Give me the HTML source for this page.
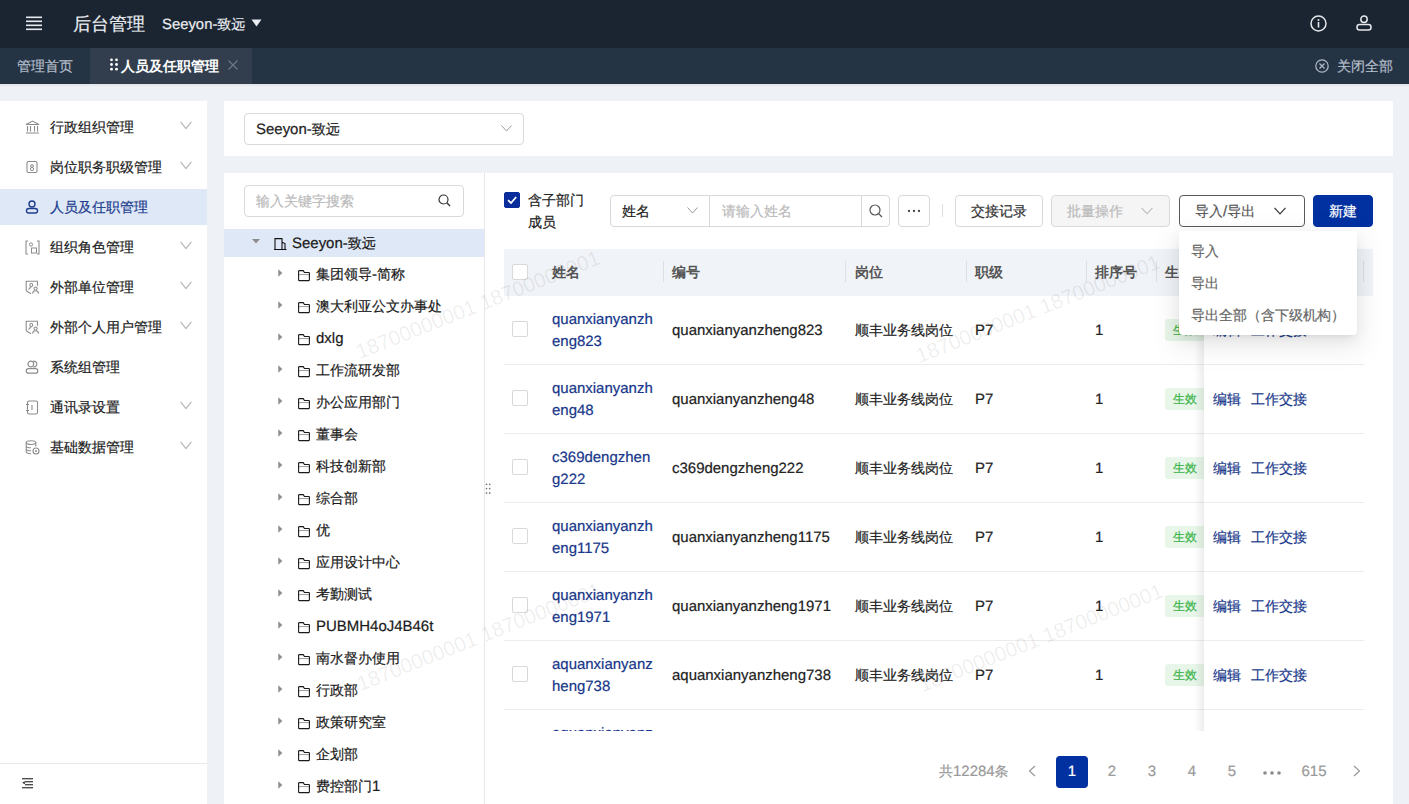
<!DOCTYPE html>
<html><head><meta charset="utf-8">
<style>
*{margin:0;padding:0;box-sizing:border-box}
html,body{width:1409px;height:804px;overflow:hidden}
@font-face{font-family:"LSA";src:local("Liberation Sans");font-weight:normal;size-adjust:107%;unicode-range:U+0020-007E}
@font-face{font-family:"LSA";src:local("Liberation Sans Bold");font-weight:bold;size-adjust:107%;unicode-range:U+0020-007E}
body{background:#eef1f5;text-rendering:geometricPrecision;font-family:"LSA","Liberation Sans",sans-serif;font-size:14px;color:#333;position:relative}
.a{position:absolute}
.t{position:absolute;white-space:nowrap;line-height:20px}
svg{display:block}
.t,.tx,.nm,.cd,.ps,.lv,.od,.op,.op2,.pg,.btn,.tag{-webkit-text-stroke:0.2px currentColor}
.t,.tx,.th,.nm,.cd,.ps,.lv,.od,.op,.op2,.pg{margin-top:1px}
.btn{padding-top:1px}
/* header */
#hdr{left:0;top:0;width:1409px;height:48px;background:#1b2532}
#tabs{left:0;top:48px;width:1409px;height:36px;background:#253445}
#side{left:0;top:101px;width:207px;height:703px;background:#fff}
.mi{position:absolute;left:0;width:207px;height:36px}
.mi .tx{position:absolute;left:50px;top:8px;line-height:20px;color:#222}
.mi .ic{position:absolute;left:25px;top:11px}
.mi .cv{position:absolute;left:180px;top:12px}
#top{left:224px;top:101px;width:1169px;height:55px;background:#fff}
#low{left:224px;top:173px;width:1169px;height:631px;background:#fff}
.inp{position:absolute;border:1px solid #d9d9d9;border-radius:4px;background:#fff}
.tr{position:absolute;left:224px;width:260px;height:32px}
.tr .car{position:absolute;left:54px;top:11px}
.tr .fd{position:absolute;left:73.5px;top:11.5px}
.tr .tx{position:absolute;left:92px;top:6px;line-height:20px;color:#1a1a1a}
.btn{position:absolute;top:195px;height:32px;border:1px solid #d9d9d9;border-radius:4px;background:#fff;color:#333;line-height:30px;text-align:center}
.th{position:absolute;top:262px;line-height:20px;font-weight:bold;color:#555}
.sep{position:absolute;top:261px;width:1px;height:21px;background:#dcdfe6}
.rb{position:absolute;left:504px;width:860px;height:1px;background:#ececec}
.cb{position:absolute;width:16px;height:16px;border:1px solid #d9d9d9;border-radius:2px;background:#fff}
.nm{position:absolute;left:552px;line-height:22px;color:#17378a}
.cd{position:absolute;left:672px;line-height:20px;color:#222}
.ps{position:absolute;left:855px;line-height:20px;color:#222}
.lv{position:absolute;left:975px;line-height:20px;color:#222}
.od{position:absolute;left:1095px;line-height:20px;color:#222}
.tag{position:absolute;left:1165px;width:48px;height:22px;background:#e7f6e8;border-radius:3px;color:#3bb34a;font-size:12px;line-height:22px;padding-left:8px}
.op{position:absolute;left:1213px;line-height:20px;color:#17378a}
.op2{position:absolute;left:1251px;line-height:20px;color:#17378a}
.wm{position:absolute;font-size:20px;font-family:"Liberation Sans",sans-serif;color:rgba(0,0,0,0.075);white-space:nowrap;transform-origin:0 100%;transform:rotate(-21.6deg);line-height:20px}
.pg{position:absolute;top:761px;line-height:20px;color:#999;text-align:center;width:32px}
</style></head><body>

<!-- HEADER -->
<div id="hdr" class="a">
  <svg class="a" style="left:26px;top:16px" width="16" height="15" viewBox="0 0 16 15">
    <rect x="0" y="0.5" width="16" height="1.6" fill="#e8eaee"/>
    <rect x="0" y="4.5" width="16" height="1.6" fill="#e8eaee"/>
    <rect x="0" y="8.5" width="16" height="1.6" fill="#e8eaee"/>
    <rect x="0" y="12.5" width="16" height="1.6" fill="#e8eaee"/>
  </svg>
  <div class="t" style="left:73px;top:11px;font-size:18px;line-height:26px;color:#e9ecf0">后台管理</div>
  <div class="t" style="left:162px;top:13px;font-size:13.9px;line-height:22px;color:#e9ecf0">Seeyon-致远</div>
  <svg class="a" style="left:251px;top:19px" width="11" height="8" viewBox="0 0 11 8"><path d="M0.5 0.5 L10.5 0.5 L5.5 7.5Z" fill="#e9ecf0"/></svg>
  <svg class="a" style="left:1310px;top:15px" width="17" height="17" viewBox="0 0 17 17">
    <circle cx="8.5" cy="8.5" r="7.5" fill="none" stroke="#e6e8ec" stroke-width="1.5"/>
    <circle cx="8.5" cy="5" r="1" fill="#e6e8ec"/>
    <rect x="7.7" y="7" width="1.6" height="5.5" fill="#e6e8ec"/>
  </svg>
  <svg class="a" style="left:1356px;top:15px" width="16" height="16" viewBox="0 0 16 16">
    <circle cx="8" cy="4.2" r="3.2" fill="none" stroke="#e6e8ec" stroke-width="1.5"/>
    <rect x="1" y="9.5" width="14" height="5.5" rx="2.5" fill="none" stroke="#e6e8ec" stroke-width="1.5"/>
  </svg>
</div>

<!-- TABS -->
<div id="tabs" class="a">
  <div class="t" style="left:17px;top:8px;color:#b3bcc8">管理首页</div>
  <div class="a" style="left:90px;top:0;width:162px;height:36px;background:#323e4e"></div>
  <svg class="a" style="left:110px;top:10px" width="8" height="13" viewBox="0 0 8 13">
    <circle cx="1.5" cy="1.8" r="1.4" fill="#fff"/><circle cx="6.5" cy="1.8" r="1.4" fill="#fff"/>
    <circle cx="1.5" cy="6.5" r="1.4" fill="#fff"/><circle cx="6.5" cy="6.5" r="1.4" fill="#fff"/>
    <circle cx="1.5" cy="11.2" r="1.4" fill="#fff"/><circle cx="6.5" cy="11.2" r="1.4" fill="#fff"/>
  </svg>
  <div class="t" style="left:121px;top:8px;color:#fff;font-weight:bold;-webkit-text-stroke:0">人员及任职管理</div>
  <svg class="a" style="left:228px;top:12px" width="10" height="10" viewBox="0 0 10 10"><path d="M0.5 0.5L9.5 9.5M9.5 0.5L0.5 9.5" stroke="#6d7886" stroke-width="1.2"/></svg>
  <svg class="a" style="left:1315px;top:11px" width="14" height="14" viewBox="0 0 14 14">
    <circle cx="7" cy="7" r="6.2" fill="none" stroke="#b3bcc8" stroke-width="1.2"/>
    <path d="M4.5 4.5L9.5 9.5M9.5 4.5L4.5 9.5" stroke="#b3bcc8" stroke-width="1.2"/>
  </svg>
  <div class="t" style="left:1337px;top:8px;color:#b3bcc8">关闭全部</div>
</div>

<div class="a" style="left:0;top:84px;width:1409px;height:3px;background:linear-gradient(rgba(0,0,0,0.06),rgba(0,0,0,0))"></div>
<!-- SIDEBAR -->
<div id="side" class="a">
  <div class="mi" style="top:8px"><div class="tx">行政组织管理</div>
    <svg class="ic" width="15" height="14" viewBox="0 0 15 14"><path d="M1 4.5L7.5 1 14 4.5Z M2.5 6v5.5M5.5 6v5.5M9.5 6v5.5M12.5 6v5.5 M1 13h13" fill="none" stroke="#8c8c8c" stroke-width="1.1"/></svg>
    <svg class="cv" width="12" height="9" viewBox="0 0 12 9"><path d="M0.6 0.8L6 7.6 11.4 0.8" fill="none" stroke="#b3b3b3" stroke-width="1.1"/></svg></div>
  <div class="mi" style="top:48px"><div class="tx">岗位职务职级管理</div>
    <svg class="ic" width="14" height="14" viewBox="0 0 14 14"><rect x="2" y="1.5" width="10" height="11" rx="1.5" fill="none" stroke="#8c8c8c" stroke-width="1.1"/><circle cx="7" cy="6" r="1.4" fill="none" stroke="#8c8c8c"/><circle cx="7" cy="9" r="1.6" fill="none" stroke="#8c8c8c"/></svg>
    <svg class="cv" width="12" height="9" viewBox="0 0 12 9"><path d="M0.6 0.8L6 7.6 11.4 0.8" fill="none" stroke="#b3b3b3" stroke-width="1.1"/></svg></div>
  <div class="mi" style="top:88px;background:#dfe8f6"><div class="tx" style="color:#1d3d8f">人员及任职管理</div>
    <svg class="ic" width="14" height="14" viewBox="0 0 14 14"><circle cx="7" cy="4" r="3" fill="none" stroke="#1d3d8f" stroke-width="1.4"/><rect x="1.5" y="8.5" width="11" height="4.5" rx="2.2" fill="none" stroke="#1d3d8f" stroke-width="1.4"/></svg></div>
  <div class="mi" style="top:128px"><div class="tx">组织角色管理</div>
    <svg class="ic" width="15" height="15" viewBox="0 0 15 15"><path d="M3 1H1v13h2M12 1h2v13h-2" fill="none" stroke="#8c8c8c" stroke-width="1.1"/><circle cx="6" cy="4.5" r="1.6" fill="none" stroke="#8c8c8c"/><rect x="6.5" y="8" width="5" height="5" fill="none" stroke="#8c8c8c"/></svg>
    <svg class="cv" width="12" height="9" viewBox="0 0 12 9"><path d="M0.6 0.8L6 7.6 11.4 0.8" fill="none" stroke="#b3b3b3" stroke-width="1.1"/></svg></div>
  <div class="mi" style="top:168px"><div class="tx">外部单位管理</div>
    <svg class="ic" width="15" height="15" viewBox="0 0 15 15"><path d="M6 13.8L1.2 10.6V1.2h11.3v4.6" fill="none" stroke="#8c8c8c" stroke-width="1.1"/><circle cx="6.3" cy="5" r="1.5" fill="none" stroke="#8c8c8c" stroke-width="1.05"/><path d="M3.6 9.6c.4-1.4 1.4-2.1 2.7-2.1" fill="none" stroke="#8c8c8c" stroke-width="1.05"/><circle cx="10.6" cy="8.6" r="1.6" fill="none" stroke="#8c8c8c" stroke-width="1.05"/><path d="M7.6 13.6c.2-1.8 1.4-2.8 3-2.8s2.8 1 3 2.8" fill="none" stroke="#8c8c8c" stroke-width="1.05"/></svg>
    <svg class="cv" width="12" height="9" viewBox="0 0 12 9"><path d="M0.6 0.8L6 7.6 11.4 0.8" fill="none" stroke="#b3b3b3" stroke-width="1.1"/></svg></div>
  <div class="mi" style="top:208px"><div class="tx">外部个人用户管理</div>
    <svg class="ic" width="15" height="15" viewBox="0 0 15 15"><path d="M6 13.8L1.2 10.6V1.2h11.3v4.6" fill="none" stroke="#8c8c8c" stroke-width="1.1"/><circle cx="6.3" cy="5" r="1.5" fill="none" stroke="#8c8c8c" stroke-width="1.05"/><path d="M3.6 9.6c.4-1.4 1.4-2.1 2.7-2.1" fill="none" stroke="#8c8c8c" stroke-width="1.05"/><circle cx="10.6" cy="8.6" r="1.6" fill="none" stroke="#8c8c8c" stroke-width="1.05"/><path d="M7.6 13.6c.2-1.8 1.4-2.8 3-2.8s2.8 1 3 2.8" fill="none" stroke="#8c8c8c" stroke-width="1.05"/></svg>
    <svg class="cv" width="12" height="9" viewBox="0 0 12 9"><path d="M0.6 0.8L6 7.6 11.4 0.8" fill="none" stroke="#b3b3b3" stroke-width="1.1"/></svg></div>
  <div class="mi" style="top:248px"><div class="tx">系统组管理</div>
    <svg class="ic" width="14" height="14" viewBox="0 0 14 14"><path d="M8.2 1.3a2.9 2.9 0 1 1 0 5.6" fill="none" stroke="#8c8c8c" stroke-width="1.2"/><circle cx="5.8" cy="4.1" r="2.9" fill="none" stroke="#8c8c8c" stroke-width="1.2"/><rect x="1.2" y="8.6" width="11.6" height="4.6" rx="2.3" fill="none" stroke="#8c8c8c" stroke-width="1.2"/></svg></div>
  <div class="mi" style="top:288px"><div class="tx">通讯录设置</div>
    <svg class="ic" width="14" height="15" viewBox="0 0 14 15"><rect x="2.5" y="1" width="10" height="13" rx="1.5" fill="none" stroke="#8c8c8c" stroke-width="1.1"/><path d="M1 4.5h3M1 10.5h3M7 5v5" fill="none" stroke="#8c8c8c" stroke-width="1.1"/></svg>
    <svg class="cv" width="12" height="9" viewBox="0 0 12 9"><path d="M0.6 0.8L6 7.6 11.4 0.8" fill="none" stroke="#b3b3b3" stroke-width="1.1"/></svg></div>
  <div class="mi" style="top:328px"><div class="tx">基础数据管理</div>
    <svg class="ic" width="15" height="15" viewBox="0 0 15 15"><ellipse cx="6" cy="2.6" rx="4.8" ry="1.9" fill="none" stroke="#8c8c8c" stroke-width="1.1"/><path d="M1.2 2.6v9.2c0 1 2.1 1.9 4.8 1.9M10.8 2.6v4M1.2 5.9c0 1 2.1 1.9 4.8 1.9M1.2 8.9c0 1 2.1 1.9 4.8 1.9" fill="none" stroke="#8c8c8c" stroke-width="1.1"/><circle cx="11" cy="11" r="3" fill="none" stroke="#8c8c8c" stroke-width="1.1"/><circle cx="11" cy="11" r="1" fill="#8c8c8c"/></svg>
    <svg class="cv" width="12" height="9" viewBox="0 0 12 9"><path d="M0.6 0.8L6 7.6 11.4 0.8" fill="none" stroke="#b3b3b3" stroke-width="1.1"/></svg></div>
  <div class="a" style="left:0;top:662px;width:207px;height:1px;background:#e8e8e8"></div>
  <svg class="a" style="left:22px;top:677px" width="11" height="11" viewBox="0 0 11 11"><rect x="0" y="0.2" width="11" height="1.1" fill="#222"/><rect x="3" y="3.2" width="8" height="1.1" fill="#222"/><rect x="3" y="6.2" width="8" height="1.1" fill="#222"/><rect x="0" y="9.2" width="11" height="1.1" fill="#222"/><path d="M0.2 4.7L2.8 3.2V6.3Z" fill="#222"/></svg>
</div>

<!-- TOP PANEL -->
<div id="top" class="a"></div>
<div class="inp" style="left:244px;top:113px;width:280px;height:32px"></div>
<div class="t" style="left:256px;top:119px;color:#222">Seeyon-致远</div>
<svg class="a" style="left:501px;top:125px" width="11" height="7" viewBox="0 0 11 7"><path d="M0.5 0.5L5.5 6 10.5 0.5" fill="none" stroke="#999" stroke-width="1"/></svg>

<!-- LOWER PANEL -->
<div id="low" class="a"></div>
<div class="a" style="left:484px;top:173px;width:1px;height:631px;background:#e8e8e8"></div>
<!-- splitter dots -->
<svg class="a" style="left:485px;top:483px" width="7" height="11" viewBox="0 0 7 11"><circle cx="1.5" cy="1.3" r=".85" fill="#777"/><circle cx="4.7" cy="1.3" r=".85" fill="#777"/><circle cx="1.5" cy="5.6" r=".85" fill="#777"/><circle cx="4.7" cy="5.6" r=".85" fill="#777"/><circle cx="1.5" cy="9.9" r=".85" fill="#777"/><circle cx="4.7" cy="9.9" r=".85" fill="#777"/></svg>

<!-- tree search -->
<div class="inp" style="left:244px;top:185px;width:220px;height:32px"></div>
<div class="t" style="left:256px;top:191px;color:#bbb">输入关键字搜索</div>
<svg class="a" style="left:438px;top:194px" width="13" height="13" viewBox="0 0 13 13"><circle cx="5.5" cy="5.5" r="4.5" fill="none" stroke="#333" stroke-width="1.2"/><path d="M8.8 8.8L12 12" stroke="#333" stroke-width="1.3"/></svg>

<!-- tree -->
<div class="tr" style="top:229px;height:28px;background:#dfe8f6">
  <svg class="a" style="left:28px;top:10px" width="8" height="5" viewBox="0 0 8 5"><path d="M0 0H8L4 4.5Z" fill="#8c8c8c"/></svg>
  <svg class="a" style="left:50px;top:8px" width="13" height="13" viewBox="0 0 13 13"><path d="M1 12.5V1.6h7v10.9M8 5.2l3 1.4v5.9M0 12.5h12.5" fill="none" stroke="#111" stroke-width="1.1"/></svg>
  <div class="tx" style="left:68px;top:4px">Seeyon-致远</div>
</div>
<div class="tr" style="top:258px">
  <svg class="car" width="5" height="8" viewBox="0 0 5 8"><path d="M0.3 0.3V7.7L4.3 4Z" fill="#8c8c8c"/></svg>
  <svg class="fd" width="12" height="12" viewBox="0 0 12 12"><path d="M11.4 4.6H.6" fill="none" stroke="#9a9a9a" stroke-width="1"/><path d="M1.2 .6h4.1l1.1 1.9h4.4a.6.6 0 0 1 .6.6v6.9a.6.6 0 0 1-.6.6H1.2a.6.6 0 0 1-.6-.6V1.2a.6.6 0 0 1 .6-.6Z" fill="none" stroke="#1a1a1a" stroke-width="1.1"/></svg>
  <div class="tx">集团领导-简称</div></div>
<div class="tr" style="top:290px">
  <svg class="car" width="5" height="8" viewBox="0 0 5 8"><path d="M0.3 0.3V7.7L4.3 4Z" fill="#8c8c8c"/></svg>
  <svg class="fd" width="12" height="12" viewBox="0 0 12 12"><path d="M11.4 4.6H.6" fill="none" stroke="#9a9a9a" stroke-width="1"/><path d="M1.2 .6h4.1l1.1 1.9h4.4a.6.6 0 0 1 .6.6v6.9a.6.6 0 0 1-.6.6H1.2a.6.6 0 0 1-.6-.6V1.2a.6.6 0 0 1 .6-.6Z" fill="none" stroke="#1a1a1a" stroke-width="1.1"/></svg>
  <div class="tx">澳大利亚公文办事处</div></div>
<div class="tr" style="top:322px">
  <svg class="car" width="5" height="8" viewBox="0 0 5 8"><path d="M0.3 0.3V7.7L4.3 4Z" fill="#8c8c8c"/></svg>
  <svg class="fd" width="12" height="12" viewBox="0 0 12 12"><path d="M11.4 4.6H.6" fill="none" stroke="#9a9a9a" stroke-width="1"/><path d="M1.2 .6h4.1l1.1 1.9h4.4a.6.6 0 0 1 .6.6v6.9a.6.6 0 0 1-.6.6H1.2a.6.6 0 0 1-.6-.6V1.2a.6.6 0 0 1 .6-.6Z" fill="none" stroke="#1a1a1a" stroke-width="1.1"/></svg>
  <div class="tx">dxlg</div></div>
<div class="tr" style="top:354px">
  <svg class="car" width="5" height="8" viewBox="0 0 5 8"><path d="M0.3 0.3V7.7L4.3 4Z" fill="#8c8c8c"/></svg>
  <svg class="fd" width="12" height="12" viewBox="0 0 12 12"><path d="M11.4 4.6H.6" fill="none" stroke="#9a9a9a" stroke-width="1"/><path d="M1.2 .6h4.1l1.1 1.9h4.4a.6.6 0 0 1 .6.6v6.9a.6.6 0 0 1-.6.6H1.2a.6.6 0 0 1-.6-.6V1.2a.6.6 0 0 1 .6-.6Z" fill="none" stroke="#1a1a1a" stroke-width="1.1"/></svg>
  <div class="tx">工作流研发部</div></div>
<div class="tr" style="top:386px">
  <svg class="car" width="5" height="8" viewBox="0 0 5 8"><path d="M0.3 0.3V7.7L4.3 4Z" fill="#8c8c8c"/></svg>
  <svg class="fd" width="12" height="12" viewBox="0 0 12 12"><path d="M11.4 4.6H.6" fill="none" stroke="#9a9a9a" stroke-width="1"/><path d="M1.2 .6h4.1l1.1 1.9h4.4a.6.6 0 0 1 .6.6v6.9a.6.6 0 0 1-.6.6H1.2a.6.6 0 0 1-.6-.6V1.2a.6.6 0 0 1 .6-.6Z" fill="none" stroke="#1a1a1a" stroke-width="1.1"/></svg>
  <div class="tx">办公应用部门</div></div>
<div class="tr" style="top:418px">
  <svg class="car" width="5" height="8" viewBox="0 0 5 8"><path d="M0.3 0.3V7.7L4.3 4Z" fill="#8c8c8c"/></svg>
  <svg class="fd" width="12" height="12" viewBox="0 0 12 12"><path d="M11.4 4.6H.6" fill="none" stroke="#9a9a9a" stroke-width="1"/><path d="M1.2 .6h4.1l1.1 1.9h4.4a.6.6 0 0 1 .6.6v6.9a.6.6 0 0 1-.6.6H1.2a.6.6 0 0 1-.6-.6V1.2a.6.6 0 0 1 .6-.6Z" fill="none" stroke="#1a1a1a" stroke-width="1.1"/></svg>
  <div class="tx">董事会</div></div>
<div class="tr" style="top:450px">
  <svg class="car" width="5" height="8" viewBox="0 0 5 8"><path d="M0.3 0.3V7.7L4.3 4Z" fill="#8c8c8c"/></svg>
  <svg class="fd" width="12" height="12" viewBox="0 0 12 12"><path d="M11.4 4.6H.6" fill="none" stroke="#9a9a9a" stroke-width="1"/><path d="M1.2 .6h4.1l1.1 1.9h4.4a.6.6 0 0 1 .6.6v6.9a.6.6 0 0 1-.6.6H1.2a.6.6 0 0 1-.6-.6V1.2a.6.6 0 0 1 .6-.6Z" fill="none" stroke="#1a1a1a" stroke-width="1.1"/></svg>
  <div class="tx">科技创新部</div></div>
<div class="tr" style="top:482px">
  <svg class="car" width="5" height="8" viewBox="0 0 5 8"><path d="M0.3 0.3V7.7L4.3 4Z" fill="#8c8c8c"/></svg>
  <svg class="fd" width="12" height="12" viewBox="0 0 12 12"><path d="M11.4 4.6H.6" fill="none" stroke="#9a9a9a" stroke-width="1"/><path d="M1.2 .6h4.1l1.1 1.9h4.4a.6.6 0 0 1 .6.6v6.9a.6.6 0 0 1-.6.6H1.2a.6.6 0 0 1-.6-.6V1.2a.6.6 0 0 1 .6-.6Z" fill="none" stroke="#1a1a1a" stroke-width="1.1"/></svg>
  <div class="tx">综合部</div></div>
<div class="tr" style="top:514px">
  <svg class="car" width="5" height="8" viewBox="0 0 5 8"><path d="M0.3 0.3V7.7L4.3 4Z" fill="#8c8c8c"/></svg>
  <svg class="fd" width="12" height="12" viewBox="0 0 12 12"><path d="M11.4 4.6H.6" fill="none" stroke="#9a9a9a" stroke-width="1"/><path d="M1.2 .6h4.1l1.1 1.9h4.4a.6.6 0 0 1 .6.6v6.9a.6.6 0 0 1-.6.6H1.2a.6.6 0 0 1-.6-.6V1.2a.6.6 0 0 1 .6-.6Z" fill="none" stroke="#1a1a1a" stroke-width="1.1"/></svg>
  <div class="tx">优</div></div>
<div class="tr" style="top:546px">
  <svg class="car" width="5" height="8" viewBox="0 0 5 8"><path d="M0.3 0.3V7.7L4.3 4Z" fill="#8c8c8c"/></svg>
  <svg class="fd" width="12" height="12" viewBox="0 0 12 12"><path d="M11.4 4.6H.6" fill="none" stroke="#9a9a9a" stroke-width="1"/><path d="M1.2 .6h4.1l1.1 1.9h4.4a.6.6 0 0 1 .6.6v6.9a.6.6 0 0 1-.6.6H1.2a.6.6 0 0 1-.6-.6V1.2a.6.6 0 0 1 .6-.6Z" fill="none" stroke="#1a1a1a" stroke-width="1.1"/></svg>
  <div class="tx">应用设计中心</div></div>
<div class="tr" style="top:578px">
  <svg class="car" width="5" height="8" viewBox="0 0 5 8"><path d="M0.3 0.3V7.7L4.3 4Z" fill="#8c8c8c"/></svg>
  <svg class="fd" width="12" height="12" viewBox="0 0 12 12"><path d="M11.4 4.6H.6" fill="none" stroke="#9a9a9a" stroke-width="1"/><path d="M1.2 .6h4.1l1.1 1.9h4.4a.6.6 0 0 1 .6.6v6.9a.6.6 0 0 1-.6.6H1.2a.6.6 0 0 1-.6-.6V1.2a.6.6 0 0 1 .6-.6Z" fill="none" stroke="#1a1a1a" stroke-width="1.1"/></svg>
  <div class="tx">考勤测试</div></div>
<div class="tr" style="top:610px">
  <svg class="car" width="5" height="8" viewBox="0 0 5 8"><path d="M0.3 0.3V7.7L4.3 4Z" fill="#8c8c8c"/></svg>
  <svg class="fd" width="12" height="12" viewBox="0 0 12 12"><path d="M11.4 4.6H.6" fill="none" stroke="#9a9a9a" stroke-width="1"/><path d="M1.2 .6h4.1l1.1 1.9h4.4a.6.6 0 0 1 .6.6v6.9a.6.6 0 0 1-.6.6H1.2a.6.6 0 0 1-.6-.6V1.2a.6.6 0 0 1 .6-.6Z" fill="none" stroke="#1a1a1a" stroke-width="1.1"/></svg>
  <div class="tx">PUBMH4oJ4B46t</div></div>
<div class="tr" style="top:642px">
  <svg class="car" width="5" height="8" viewBox="0 0 5 8"><path d="M0.3 0.3V7.7L4.3 4Z" fill="#8c8c8c"/></svg>
  <svg class="fd" width="12" height="12" viewBox="0 0 12 12"><path d="M11.4 4.6H.6" fill="none" stroke="#9a9a9a" stroke-width="1"/><path d="M1.2 .6h4.1l1.1 1.9h4.4a.6.6 0 0 1 .6.6v6.9a.6.6 0 0 1-.6.6H1.2a.6.6 0 0 1-.6-.6V1.2a.6.6 0 0 1 .6-.6Z" fill="none" stroke="#1a1a1a" stroke-width="1.1"/></svg>
  <div class="tx">南水督办使用</div></div>
<div class="tr" style="top:674px">
  <svg class="car" width="5" height="8" viewBox="0 0 5 8"><path d="M0.3 0.3V7.7L4.3 4Z" fill="#8c8c8c"/></svg>
  <svg class="fd" width="12" height="12" viewBox="0 0 12 12"><path d="M11.4 4.6H.6" fill="none" stroke="#9a9a9a" stroke-width="1"/><path d="M1.2 .6h4.1l1.1 1.9h4.4a.6.6 0 0 1 .6.6v6.9a.6.6 0 0 1-.6.6H1.2a.6.6 0 0 1-.6-.6V1.2a.6.6 0 0 1 .6-.6Z" fill="none" stroke="#1a1a1a" stroke-width="1.1"/></svg>
  <div class="tx">行政部</div></div>
<div class="tr" style="top:706px">
  <svg class="car" width="5" height="8" viewBox="0 0 5 8"><path d="M0.3 0.3V7.7L4.3 4Z" fill="#8c8c8c"/></svg>
  <svg class="fd" width="12" height="12" viewBox="0 0 12 12"><path d="M11.4 4.6H.6" fill="none" stroke="#9a9a9a" stroke-width="1"/><path d="M1.2 .6h4.1l1.1 1.9h4.4a.6.6 0 0 1 .6.6v6.9a.6.6 0 0 1-.6.6H1.2a.6.6 0 0 1-.6-.6V1.2a.6.6 0 0 1 .6-.6Z" fill="none" stroke="#1a1a1a" stroke-width="1.1"/></svg>
  <div class="tx">政策研究室</div></div>
<div class="tr" style="top:738px">
  <svg class="car" width="5" height="8" viewBox="0 0 5 8"><path d="M0.3 0.3V7.7L4.3 4Z" fill="#8c8c8c"/></svg>
  <svg class="fd" width="12" height="12" viewBox="0 0 12 12"><path d="M11.4 4.6H.6" fill="none" stroke="#9a9a9a" stroke-width="1"/><path d="M1.2 .6h4.1l1.1 1.9h4.4a.6.6 0 0 1 .6.6v6.9a.6.6 0 0 1-.6.6H1.2a.6.6 0 0 1-.6-.6V1.2a.6.6 0 0 1 .6-.6Z" fill="none" stroke="#1a1a1a" stroke-width="1.1"/></svg>
  <div class="tx">企划部</div></div>
<div class="tr" style="top:770px">
  <svg class="car" width="5" height="8" viewBox="0 0 5 8"><path d="M0.3 0.3V7.7L4.3 4Z" fill="#8c8c8c"/></svg>
  <svg class="fd" width="12" height="12" viewBox="0 0 12 12"><path d="M11.4 4.6H.6" fill="none" stroke="#9a9a9a" stroke-width="1"/><path d="M1.2 .6h4.1l1.1 1.9h4.4a.6.6 0 0 1 .6.6v6.9a.6.6 0 0 1-.6.6H1.2a.6.6 0 0 1-.6-.6V1.2a.6.6 0 0 1 .6-.6Z" fill="none" stroke="#1a1a1a" stroke-width="1.1"/></svg>
  <div class="tx">费控部门1</div></div>

<div class="cb" style="left:504px;top:192px;background:#0a2d9c;border-color:#0a2d9c"><svg width="14" height="14" viewBox="0 0 14 14"><path d="M3 7.2L6 10 11.2 4" fill="none" stroke="#fff" stroke-width="1.8"/></svg></div>
<div class="t" style="left:528px;top:189px;line-height:22px;color:#222">含子部门<br>成员</div>
<div class="inp" style="left:610px;top:195px;width:280px;height:32px"></div>
<div class="a" style="left:709px;top:196px;width:1px;height:30px;background:#d9d9d9"></div>
<div class="a" style="left:861px;top:196px;width:1px;height:30px;background:#d9d9d9"></div>
<div class="t" style="left:622px;top:201px;color:#222">姓名</div>
<svg class="a" style="left:687px;top:207px" width="11" height="7" viewBox="0 0 11 7"><path d="M0.5 0.5L5.5 6 10.5 0.5" fill="none" stroke="#999" stroke-width="1"/></svg>
<div class="t" style="left:722px;top:201px;color:#bbb">请输入姓名</div>
<svg class="a" style="left:869px;top:204px" width="14" height="14" viewBox="0 0 14 14"><circle cx="6" cy="6" r="5" fill="none" stroke="#555" stroke-width="1.2"/><path d="M9.6 9.6L13 13" stroke="#555" stroke-width="1.3"/></svg>
<div class="btn" style="left:898px;width:32px"></div><svg class="a" style="left:907px;top:209px" width="14" height="4" viewBox="0 0 14 4"><circle cx="2" cy="2" r="1.15" fill="#444"/><circle cx="7" cy="2" r="1.15" fill="#444"/><circle cx="12" cy="2" r="1.15" fill="#444"/></svg>
<div class="a" style="left:942px;top:204px;width:1px;height:13px;background:#ddd"></div>
<div class="btn" style="left:955px;width:88px">交接记录</div>
<div class="btn" style="left:1051px;width:119px;background:#f5f5f5;color:#bbb;text-align:left;padding-left:15px">批量操作</div>
<svg class="a" style="left:1141px;top:207px" width="12" height="8" viewBox="0 0 12 8"><path d="M0.5 0.8L6 6.8 11.5 0.8" fill="none" stroke="#bbb" stroke-width="1.1"/></svg>
<div class="btn" style="left:1179px;width:126px;border-color:#5a5a5a;text-align:left;padding-left:15px;color:#555">导入/导出</div>
<svg class="a" style="left:1274px;top:207px" width="12" height="8" viewBox="0 0 12 8"><path d="M0.5 0.8L6 6.8 11.5 0.8" fill="none" stroke="#333" stroke-width="1.2"/></svg>
<div class="btn" style="left:1313px;width:60px;background:#0131a1;border-color:#0131a1;color:#fff">新建</div>

<div class="a" style="left:504px;top:249px;width:869px;height:47px;background:#f0f3f7"></div>
<div class="cb" style="left:512px;top:264px"></div>
<div class="th" style="left:552px">姓名</div>
<div class="sep" style="left:663px"></div><div class="th" style="left:672px">编号</div>
<div class="sep" style="left:845px"></div><div class="th" style="left:855px">岗位</div>
<div class="sep" style="left:966px"></div><div class="th" style="left:975px">职级</div>
<div class="sep" style="left:1086px"></div><div class="th" style="left:1095px">排序号</div>
<div class="sep" style="left:1156px"></div><div class="th" style="left:1165px">生效</div>

<div class="a" style="left:504px;top:296px;width:869px;height:435px;overflow:hidden">
<div class="cb" style="left:8px;top:25px"></div>
<div class="nm" style="left:48px;top:12px;white-space:nowrap">quanxianyanzh<br>eng823</div>
<div class="cd" style="left:168px;top:24px">quanxianyanzheng823</div>
<div class="ps" style="left:351px;top:24px">顺丰业务线岗位</div>
<div class="lv" style="left:471px;top:24px">P7</div>
<div class="od" style="left:591px;top:24px">1</div>
<div class="tag" style="left:661px;top:23px">生效</div>
<div class="rb" style="left:0;top:68px"></div>
<div class="cb" style="left:8px;top:94px"></div>
<div class="nm" style="left:48px;top:81px;white-space:nowrap">quanxianyanzh<br>eng48</div>
<div class="cd" style="left:168px;top:93px">quanxianyanzheng48</div>
<div class="ps" style="left:351px;top:93px">顺丰业务线岗位</div>
<div class="lv" style="left:471px;top:93px">P7</div>
<div class="od" style="left:591px;top:93px">1</div>
<div class="tag" style="left:661px;top:92px">生效</div>
<div class="rb" style="left:0;top:137px"></div>
<div class="cb" style="left:8px;top:163px"></div>
<div class="nm" style="left:48px;top:150px;white-space:nowrap">c369dengzhen<br>g222</div>
<div class="cd" style="left:168px;top:162px">c369dengzheng222</div>
<div class="ps" style="left:351px;top:162px">顺丰业务线岗位</div>
<div class="lv" style="left:471px;top:162px">P7</div>
<div class="od" style="left:591px;top:162px">1</div>
<div class="tag" style="left:661px;top:161px">生效</div>
<div class="rb" style="left:0;top:206px"></div>
<div class="cb" style="left:8px;top:232px"></div>
<div class="nm" style="left:48px;top:219px;white-space:nowrap">quanxianyanzh<br>eng1175</div>
<div class="cd" style="left:168px;top:231px">quanxianyanzheng1175</div>
<div class="ps" style="left:351px;top:231px">顺丰业务线岗位</div>
<div class="lv" style="left:471px;top:231px">P7</div>
<div class="od" style="left:591px;top:231px">1</div>
<div class="tag" style="left:661px;top:230px">生效</div>
<div class="rb" style="left:0;top:275px"></div>
<div class="cb" style="left:8px;top:301px"></div>
<div class="nm" style="left:48px;top:288px;white-space:nowrap">quanxianyanzh<br>eng1971</div>
<div class="cd" style="left:168px;top:300px">quanxianyanzheng1971</div>
<div class="ps" style="left:351px;top:300px">顺丰业务线岗位</div>
<div class="lv" style="left:471px;top:300px">P7</div>
<div class="od" style="left:591px;top:300px">1</div>
<div class="tag" style="left:661px;top:299px">生效</div>
<div class="rb" style="left:0;top:344px"></div>
<div class="cb" style="left:8px;top:370px"></div>
<div class="nm" style="left:48px;top:357px;white-space:nowrap">aquanxianyanz<br>heng738</div>
<div class="cd" style="left:168px;top:369px">aquanxianyanzheng738</div>
<div class="ps" style="left:351px;top:369px">顺丰业务线岗位</div>
<div class="lv" style="left:471px;top:369px">P7</div>
<div class="od" style="left:591px;top:369px">1</div>
<div class="tag" style="left:661px;top:368px">生效</div>
<div class="rb" style="left:0;top:413px"></div>
<div class="cb" style="left:8px;top:439px"></div>
<div class="nm" style="left:48px;top:426px;white-space:nowrap">aquanxianyanz<br>heng739</div>
</div>
<div class="a" style="left:1194px;top:249px;width:10px;height:482px;background:linear-gradient(to right,rgba(0,0,0,0),rgba(0,0,0,0.07))"></div><div class="a" style="left:1204px;top:249px;width:169px;height:482px;overflow:hidden">
<div class="a" style="left:0;top:0;width:170px;height:47px;background:#f0f3f7"></div><div class="a" style="left:0;top:47px;width:170px;height:435px;background:#fff"></div>
<div class="a" style="left:159px;top:12px;width:1px;height:21px;background:#dcdfe6"></div>
<div class="op" style="left:9px;top:71px">编辑</div><div class="op2" style="left:47px;top:71px">工作交接</div>
<div class="rb" style="left:0;width:160px;top:115px"></div>
<div class="op" style="left:9px;top:140px">编辑</div><div class="op2" style="left:47px;top:140px">工作交接</div>
<div class="rb" style="left:0;width:160px;top:184px"></div>
<div class="op" style="left:9px;top:209px">编辑</div><div class="op2" style="left:47px;top:209px">工作交接</div>
<div class="rb" style="left:0;width:160px;top:253px"></div>
<div class="op" style="left:9px;top:278px">编辑</div><div class="op2" style="left:47px;top:278px">工作交接</div>
<div class="rb" style="left:0;width:160px;top:322px"></div>
<div class="op" style="left:9px;top:347px">编辑</div><div class="op2" style="left:47px;top:347px">工作交接</div>
<div class="rb" style="left:0;width:160px;top:391px"></div>
<div class="op" style="left:9px;top:416px">编辑</div><div class="op2" style="left:47px;top:416px">工作交接</div>
<div class="rb" style="left:0;width:160px;top:460px"></div>
</div>
<div class="a" style="left:1179px;top:231px;width:178px;height:104px;background:#fff;border-radius:4px;box-shadow:0 6px 16px rgba(0,0,0,0.08),0 3px 6px -4px rgba(0,0,0,0.12),0 9px 28px 8px rgba(0,0,0,0.05)">
<div class="t" style="left:12px;top:10px;color:#666">导入</div>
<div class="t" style="left:12px;top:42px;color:#666">导出</div>
<div class="t" style="left:12px;top:74px;color:#666">导出全部（含下级机构）</div>
</div>
<div class="t" style="left:939px;top:761px;color:#999">共12284条</div>
<svg class="a" style="left:1028px;top:765px" width="8" height="12" viewBox="0 0 8 12"><path d="M7 1L1.5 6 7 11" fill="none" stroke="#999" stroke-width="1.2"/></svg>
<div class="a" style="left:1056px;top:756px;width:32px;height:32px;background:#0131a1;border-radius:4px"></div>
<div class="pg" style="left:1056px;color:#fff">1</div>
<div class="pg" style="left:1096px">2</div>
<div class="pg" style="left:1136px">3</div>
<div class="pg" style="left:1176px">4</div>
<div class="pg" style="left:1216px">5</div>
<svg class="a" style="left:1263px;top:770.5px" width="18" height="4" viewBox="0 0 18 4"><circle cx="2" cy="2" r="1.8" fill="#8a8a8a"/><circle cx="9" cy="2" r="1.8" fill="#8a8a8a"/><circle cx="16" cy="2" r="1.8" fill="#8a8a8a"/></svg>
<div class="pg" style="left:1296px;width:36px">615</div>
<svg class="a" style="left:1353px;top:765px" width="8" height="12" viewBox="0 0 8 12"><path d="M1 1L6.5 6 1 11" fill="none" stroke="#999" stroke-width="1.2"/></svg>

<div class="wm" style="left:361px;top:343px;font-size:20.8px">18700000001 18700000001</div>
<div class="wm" style="left:921px;top:347px;font-size:20.8px">18700000001 18700000001</div>
<div class="wm" style="left:362px;top:675px;font-size:20.8px">18700000001 18700000001</div>
<div class="wm" style="left:924px;top:676px;font-size:20.8px">18700000001 18700000001</div>
</body></html>
